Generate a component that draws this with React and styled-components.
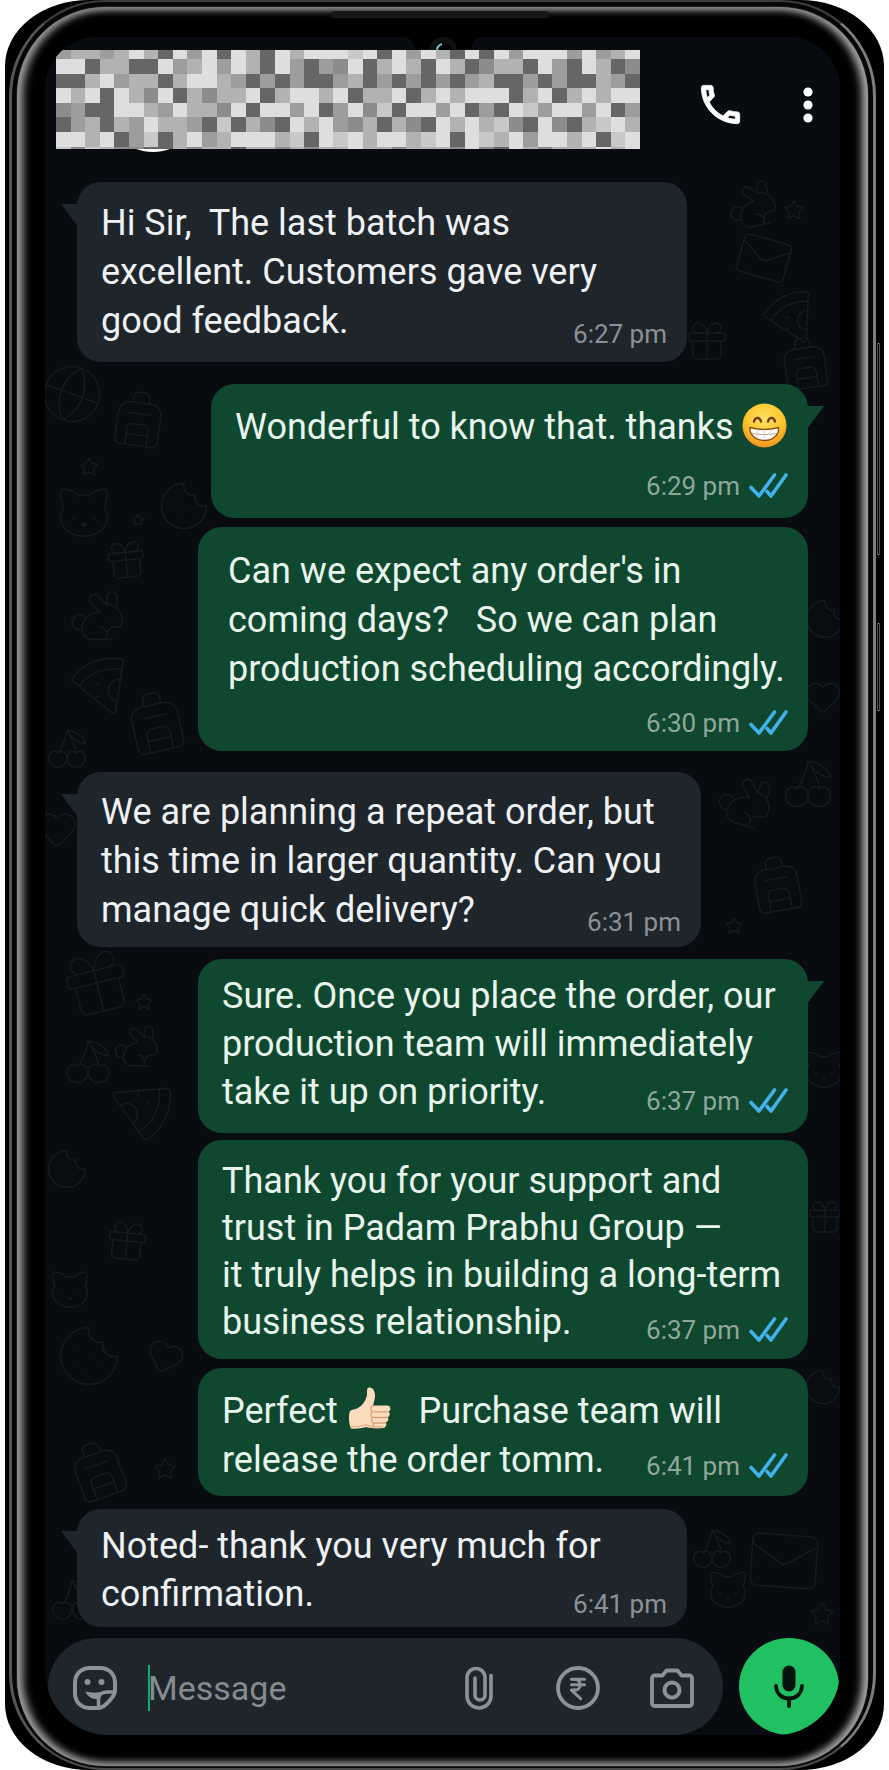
import React, { useState } from "react";
import styled, { createGlobalStyle } from "styled-components";
import {
  Backpack,
  Cat,
  Cherry,
  Cookie,
  Gift,
  Globe,
  Heart,
  IndianRupee,
  Mail,
  Pizza,
  Rabbit,
  Star
} from "lucide-react";
import { MdOutlineCall } from "react-icons/md";

const GlobalStyle = createGlobalStyle`
  * {
    box-sizing: border-box;
  }

  body {
    margin: 0;
    background: #fff;
    font-family: Roboto, "Liberation Sans", sans-serif;
  }
`;

/* ---------- phone ---------- */

const Page = styled.div`
  padding: 0 5px;
`;

const Shell = styled.div`
  position: relative;
  padding: 0 8px 0 4px;
  background: #000;
  border-radius: 84px / 66px;
  overflow: hidden;
`;

const Rim = styled.div`
  padding: 5px 5px 2px;
  background: #060606;
  border: solid #666;
  border-width: 2px 3px;
  border-color: #3c3c3c #7e7e7e #4a4a4a #565656;
  border-radius: 96px;
`;

const Glass = styled.div`
  position: relative;
  padding: 30px 28px 31px;
  background: #000;
  border-radius: 88px;
  box-shadow: inset 6px 0 9px 0 #9a9a9a, inset -6px 0 9px 0 #a6a6a6,
    inset 0 4px 8px -1px #4a4a4a, inset 0 -4px 8px -1px #6a6a6a,
    0 0 0 1px #1c1c1c;
`;

const Speaker = styled.div`
  position: absolute;
  top: 4px;
  left: 50%;
  width: 218px;
  height: 7px;
  margin-left: -112px;
  background: #161616;
  border-radius: 4px;
`;

const SideKey = styled.div`
  position: absolute;
  top: ${props => props.$top}px;
  right: 4px;
  width: 3px;
  height: ${props => props.$height}px;
  border: 1px solid #555;
  border-top-color: #bbb;
  border-bottom-color: #bbb;
  border-radius: 2px;
`;

const Screen = styled.div`
  position: relative;
  background: #080c11;
  border-radius: 52px 52px 64px 64px;
  overflow: hidden;
`;

const Notch = styled.svg`
  position: absolute;
  top: 0;
  left: 50%;
  margin-left: -42px;
`;

const Wallpaper = styled.svg`
  position: absolute;
  top: 0;
  left: 0;
  width: 100%;
  height: 100%;
  color: #151c1f;
`;

/* ---------- header ---------- */

const Header = styled.header`
  position: relative;
  display: flex;
  align-items: center;
  padding: 13px 17px 0 11px;
`;

const Avatar = styled.div`
  position: absolute;
  left: 58px;
  bottom: -3px;
  width: 100px;
  height: 96px;
  border: 3px solid #fff;
  border-radius: 50%;
`;

const HiddenName = styled.svg`
  position: relative;
  flex: 1;
  min-width: 0;
  height: 99px;
`;

const HeaderActions = styled.div`
  display: flex;
  align-items: center;
  gap: 47px;
  margin-left: 55px;
  padding-top: 10px;
`;

const IconButton = styled.button`
  display: flex;
  flex: none;
  justify-content: center;
  min-width: 30px;
  padding: 0;
  border: 0;
  background: none;
  color: ${props => props.$color || "#8d9296"};
  cursor: pointer;
`;

const CallIcon = styled(MdOutlineCall)`
  path:not([fill="none"]) {
    stroke: currentColor;
    stroke-width: 0.4px;
  }

  path[fill="none"] {
    stroke: none;
  }
`;

/* ---------- messages ---------- */

const Chat = styled.main`
  position: relative;
  display: flex;
  flex-direction: column;
  padding: 33px 32px 11px;
`;

const Bubble = styled.article`
  position: relative;
  display: grid;
  align-self: ${props => (props.$sent ? "flex-end" : "flex-start")};
  width: ${props => props.$width || 610}px;
  max-width: 100%;
  margin-top: ${props => props.$gap}px;
  padding: ${props => props.$top}px 0 0 ${props => props.$inset || 24}px;
  background: ${props => (props.$sent ? "#10482f" : "#1e262b")};
  border-radius: 24px;

  &::before {
    content: "";
    display: ${props => (props.$tail ? "block" : "none")};
    position: absolute;
    top: 22px;
    ${props => (props.$sent ? "right" : "left")}: -16px;
    width: 17px;
    height: 23px;
    background: inherit;
    clip-path: ${props =>
      props.$sent
        ? "polygon(0 0, 100% 0, 0 100%)"
        : "polygon(0 0, 100% 0, 100% 100%)"};
  }
`;

const Text = styled.p`
  grid-area: 1 / 1;
  margin: 0;
  padding: 0 8px ${props => props.$bottom}px 0;
  color: ${props => (props.$sent ? "#e9f5ec" : "#eef1f4")};
  font-size: 36px;
  line-height: ${props => props.$lineHeight}px;
  white-space: pre-wrap;
`;

const Meta = styled.div`
  grid-area: ${props => (props.$below ? "2 / 1" : "1 / 1")};
  align-self: end;
  justify-self: end;
  display: flex;
  align-items: center;
  gap: 9px;
  padding: 0 20px ${props => props.$bottom}px 0;
  color: ${props => (props.$sent ? "#8fa799" : "#8b9196")};
  font-size: 26px;
  line-height: 30px;
`;

const Emoji = styled.svg`
  width: 45px;
  height: 45px;
  vertical-align: -9px;
`;

/* ---------- composer ---------- */

const Composer = styled.form`
  position: relative;
  display: flex;
  gap: 16px;
  padding: 0 1px 0 3px;
`;

const InputPill = styled.div`
  display: flex;
  flex: 1;
  align-items: center;
  min-width: 0;
  height: 97px;
  padding: 2px 29px 0 25px;
  background: #1e262b;
  border-radius: 49px;
`;

const Field = styled.label`
  position: relative;
  flex: 1;
  min-width: 0;
  margin-left: 31px;
`;

const Caret = styled.span`
  position: absolute;
  top: 0;
  left: 0;
  width: 2px;
  height: 46px;
  background: #12a866;
`;

const MessageInput = styled.input`
  display: block;
  width: 100%;
  height: 46px;
  padding: 0;
  border: 0;
  outline: 0;
  background: none;
  color: #eef1f4;
  font: 34px/46px Roboto, "Liberation Sans", sans-serif;

  &::placeholder {
    color: #858b8f;
    opacity: 1;
  }
`;

const Tools = styled.div`
  display: flex;
  align-items: center;
  gap: 50px;

  button:first-child {
    margin-right: 12px;
  }
`;

const MicButton = styled.button`
  display: flex;
  flex: none;
  align-items: center;
  justify-content: center;
  width: 100px;
  height: 97px;
  padding: 0;
  border: 0;
  border-radius: 50%;
  background: #21c063;
  color: #03140b;
  cursor: pointer;
`;

const GREYS = ["#666", "#8c8c8c", "#9d9d9d", "#b2b2b2", "#c8c8c8", "#dedede"];

// one digit per block, an index in GREYS
const MOSAIC = [
  "2332353052505305355545052530505255525235",
  "5503300523525305202150353053013305205301",
  "0035233035532020200230202020230020200320",
  "5350531503133503553503350353555035035355",
  "1200553253315055250251405525020542552502",
  "0230325332040310535213031053534105103453",
  "5535024035235553405453553450543525535045",
  "4143110031330331313353313331510531333535"
];

const DOODLES = [
  { Icon: Globe, x: -6, y: 324, size: 66, turn: 20 },
  { Icon: Backpack, x: 62, y: 350, size: 64, turn: 8 },
  { Icon: Cookie, x: 112, y: 442, size: 54 },
  { Icon: Cat, x: 8, y: 445, size: 62 },
  { Icon: Star, x: 34, y: 420, size: 20 },
  { Icon: Star, x: 86, y: 476, size: 14 },
  { Icon: Gift, x: 58, y: 500, size: 46, turn: -6 },
  { Icon: Rabbit, x: 22, y: 550, size: 60 },
  { Icon: Pizza, x: 24, y: 610, size: 64, turn: 24 },
  { Icon: Backpack, x: 76, y: 650, size: 70, turn: -12 },
  { Icon: Cherry, x: 0, y: 690, size: 44 },
  { Icon: Heart, x: -10, y: 770, size: 44 },
  { Icon: Gift, x: 14, y: 908, size: 76, turn: -14 },
  { Icon: Star, x: 90, y: 956, size: 18 },
  { Icon: Rabbit, x: 66, y: 985, size: 50 },
  { Icon: Cherry, x: 18, y: 1000, size: 50 },
  { Icon: Pizza, x: 70, y: 1040, size: 66, turn: 160 },
  { Icon: Cookie, x: 0, y: 1110, size: 44 },
  { Icon: Gift, x: 58, y: 1180, size: 48, turn: 6 },
  { Icon: Cat, x: 2, y: 1230, size: 46 },
  { Icon: Cookie, x: 10, y: 1285, size: 68 },
  { Icon: Heart, x: 100, y: 1300, size: 40, turn: 20 },
  { Icon: Backpack, x: 20, y: 1400, size: 66, turn: -20 },
  { Icon: Star, x: 108, y: 1420, size: 24 },
  { Icon: Cherry, x: 4, y: 1540, size: 46 },
  { Icon: Rabbit, x: 680, y: 142, size: 54, turn: -12 },
  { Icon: Mail, x: 690, y: 192, size: 58, turn: 16 },
  { Icon: Star, x: 738, y: 162, size: 22 },
  { Icon: Pizza, x: 716, y: 246, size: 58, turn: 18 },
  { Icon: Gift, x: 638, y: 280, size: 48 },
  { Icon: Backpack, x: 730, y: 296, size: 60, turn: -8 },
  { Icon: Cookie, x: 758, y: 560, size: 44 },
  { Icon: Heart, x: 758, y: 640, size: 40 },
  { Icon: Rabbit, x: 670, y: 735, size: 60, turn: 16 },
  { Icon: Cherry, x: 736, y: 720, size: 54 },
  { Icon: Backpack, x: 700, y: 815, size: 64, turn: -10 },
  { Icon: Star, x: 680, y: 880, size: 18 },
  { Icon: Cat, x: 756, y: 1010, size: 46 },
  { Icon: Gift, x: 760, y: 1160, size: 40 },
  { Icon: Cookie, x: 758, y: 1330, size: 40 },
  { Icon: Cherry, x: 645, y: 1490, size: 44 },
  { Icon: Mail, x: 700, y: 1485, size: 78, turn: 4 },
  { Icon: Cat, x: 660, y: 1530, size: 46 },
  { Icon: Star, x: 764, y: 1564, size: 26 }
];

const Grin = () => (
  <Emoji viewBox="0 0 45 45" role="img" aria-label="beaming face">
    <defs>
      <radialGradient id="grin" cx="50%" cy="35%" r="65%">
        <stop offset="0" stopColor="#ffe264" />
        <stop offset="0.65" stopColor="#fdc52c" />
        <stop offset="1" stopColor="#f0901d" />
      </radialGradient>
    </defs>
    <circle cx="22.5" cy="22.5" r="22" fill="url(#grin)" />
    <g fill="none" stroke="#6b3d12" strokeWidth="2.4" strokeLinecap="round">
      <path d="M12 18.5c1.2-4.8 5.8-4.8 7 0" />
      <path d="M26 18.5c1.2-4.8 5.8-4.8 7 0" />
    </g>
    <path
      d="M8 24.5c9 2.4 20 2.4 28.5 0 .8 7.5-5.5 13-14.200 13S7.2 32 8 24.5z"
      fill="#fff"
      stroke="#8a4e17"
      strokeWidth="1.4"
    />
    <path d="M9 30c8 2 19 2 27 0" fill="none" stroke="#b9a48c" />
    <path
      d="M15.5 26v9.5M22.3 26.5V37M29 26v9.5"
      stroke="#d9cdbd"
      strokeWidth="0.8"
    />
  </Emoji>
);

const ThumbsUp = () => (
  <Emoji viewBox="0 0 45 45" role="img" aria-label="thumbs up">
    <path
      d="M3 24c2-2 5-1 8-3 5-3 8-8 9-13 .5-3-1-7 2-7.5 4-.5 6 4 6 8 0 4-1.5 7-2 10h14c4 0 4.5 5 1.5 6 2 1.5 1.5 5-1 5.5 1.5 2 1 4.5-1.5 5 1 2.5 0 5.5-3 6-4 .8-12 .5-17-1-5 1.5-10 2-15 1.5C1.5 37 1.5 27 3 24z"
      fill="#fbdcbc"
    />
    <path
      d="M26 18.5c-3 1-2.5 5-.5 6-2 1.5-2 5 0 6-1.5 2-1 4.5 1 5.5-.5 2-.2 4 1 5M27 24.8h13.5M27 30.5h13M27.5 36h11"
      fill="none"
      stroke="#d9a077"
      strokeWidth="1.3"
      strokeLinecap="round"
    />
    <path
      d="M4 39.5c6 .5 11-.5 15-1.5 5 2 13 2.2 17 1.5"
      fill="none"
      stroke="#e6b48e"
      strokeWidth="1.4"
    />
  </Emoji>
);

const Ticks = () => (
  <svg
    width="39"
    height="26"
    viewBox="0 0 39 26"
    fill="none"
    stroke="#43b2ec"
    strokeWidth="3.6"
    strokeLinecap="round"
    strokeLinejoin="round"
    role="img"
    aria-label="Read"
  >
    <path d="M2 14.5l8 8.5L25.5 2M18 18.5l4 4.5L37 2" />
  </svg>
);

const StickerIcon = () => (
  <svg width="44" height="44" viewBox="0 0 44 44" fill="none">
    <path
      d="M17 2h10c9 0 15 6 15 15v8c0 5-11 17-16 17h-9C8 42 2 36 2 27V17C2 8 8 2 17 2z"
      stroke="currentColor"
      strokeWidth="4"
    />
    <path
      d="M25.5 42v-8c0-5 3-8 8-8H42"
      stroke="currentColor"
      strokeWidth="3.5"
    />
    <path
      d="M12.5 25.5c6 1.5 12 1.5 18 0L25 33c-6 .5-10.5-2.5-12.5-7.5z"
      fill="currentColor"
    />
    <circle cx="14.5" cy="16" r="3" fill="currentColor" />
    <circle cx="28.5" cy="16" r="3" fill="currentColor" />
  </svg>
);

const ClipIcon = () => (
  <svg
    width="28"
    height="44"
    viewBox="0 0 28 44"
    fill="none"
    stroke="currentColor"
    strokeWidth="3.6"
    strokeLinecap="round"
  >
    <path d="M26 9.5V30a12 12 0 0 1-24 0V11.5a9 9 0 0 1 18 0V29a5 5 0 0 1-10 0V12" />
  </svg>
);

const RupeeIcon = () => (
  <svg width="44" height="44" viewBox="0 0 44 44" fill="none">
    <circle cx="22" cy="22" r="20" stroke="currentColor" strokeWidth="3.8" />
    <IndianRupee x={9} y={10} size={26} strokeWidth={2.8} />
  </svg>
);

const CameraIcon = () => (
  <svg
    width="44"
    height="40"
    viewBox="0 0 44 40"
    fill="none"
    stroke="currentColor"
    strokeWidth="3.8"
    strokeLinejoin="round"
  >
    <path d="M4.5 7.5h8l4-5h11l4 5h8A2.5 2.5 0 0 1 42 10v25.5a2.5 2.5 0 0 1-2.5 2.5h-35A2.5 2.5 0 0 1 2 35.5V10a2.5 2.5 0 0 1 2.5-2.5z" />
    <circle cx="22" cy="22" r="7.5" strokeWidth="4" />
  </svg>
);

const MicIcon = () => (
  <svg width="30" height="43" viewBox="0 0 30 43" fill="none">
    <rect x="8.5" y="0.5" width="13" height="26" rx="6.5" fill="currentColor" />
    <path
      d="M2 21c.5 8 6 12.5 13 12.5S27.5 29 28 21M15 33.5V41"
      stroke="currentColor"
      strokeWidth="3.8"
      strokeLinecap="round"
    />
  </svg>
);

const DotsIcon = () => (
  <svg width="10" height="36" viewBox="0 0 10 36" fill="currentColor">
    <circle cx="5" cy="5" r="4.6" />
    <circle cx="5" cy="18" r="4.6" />
    <circle cx="5" cy="31" r="4.6" />
  </svg>
);

const MESSAGES = [
  {
    time: "6:27 pm",
    tail: true,
    gap: 0,
    top: 17,
    bottom: 16,
    metaBottom: 13,
    text: (
      <>
        Hi Sir,{"  "}The last batch was
        <br />
        excellent. Customers gave very
        <br />
        good feedback.
      </>
    )
  },
  {
    sent: true,
    time: "6:29 pm",
    tail: true,
    gap: 22,
    width: 597,
    top: 19,
    bottom: 19,
    metaBottom: 17,
    metaBelow: true,
    text: (
      <>
        Wonderful to know that. thanks <Grin />
      </>
    )
  },
  {
    sent: true,
    time: "6:30 pm",
    gap: 9,
    top: 20,
    inset: 30,
    bottom: 14,
    metaBottom: 13,
    metaBelow: true,
    text: (
      <>
        Can we expect any order's in
        <br />
        coming days?{"   "}So we can plan
        <br />
        production scheduling accordingly.
      </>
    )
  },
  {
    time: "6:31 pm",
    tail: true,
    gap: 21,
    width: 624,
    top: 16,
    bottom: 12,
    metaBottom: 10,
    text: (
      <>
        We are planning a repeat order, but
        <br />
        this time in larger quantity. Can you
        <br />
        manage quick delivery?
      </>
    )
  },
  {
    sent: true,
    time: "6:37 pm",
    tail: true,
    gap: 12,
    lineHeight: 48,
    top: 13,
    bottom: 17,
    metaBottom: 17,
    text: (
      <>
        Sure. Once you place the order, our
        <br />
        production team will immediately
        <br />
        take it up on priority.
      </>
    )
  },
  {
    sent: true,
    time: "6:37 pm",
    gap: 7,
    lineHeight: 47,
    top: 18,
    bottom: 13,
    metaBottom: 14,
    text: (
      <>
        Thank you for your support and
        <br />
        trust in Padam Prabhu Group —
        <br />
        it truly helps in building a long-term
        <br />
        business relationship.
      </>
    )
  },
  {
    sent: true,
    time: "6:41 pm",
    gap: 9,
    top: 19,
    bottom: 11,
    metaBottom: 15,
    text: (
      <>
        Perfect <ThumbsUp />
        {"   "}Purchase team will
        <br />
        release the order tomm.
      </>
    )
  },
  {
    time: "6:41 pm",
    tail: true,
    gap: 13,
    lineHeight: 48,
    top: 13,
    bottom: 9,
    metaBottom: 8,
    text: (
      <>
        Noted- thank you very much for
        <br />
        confirmation.
      </>
    )
  }
];

const Message = ({ message }) => (
  <Bubble
    $sent={message.sent}
    $tail={message.tail}
    $width={message.width}
    $gap={message.gap}
    $top={message.top}
    $inset={message.inset}
  >
    <Text
      $sent={message.sent}
      $bottom={message.bottom}
      $lineHeight={message.lineHeight || 49}
    >
      {message.text}
    </Text>
    <Meta
      $sent={message.sent}
      $bottom={message.metaBottom}
      $below={message.metaBelow}
    >
      <time>{message.time}</time>
      {message.sent && <Ticks />}
    </Meta>
  </Bubble>
);

const App = () => {
  const [draft, setDraft] = useState("");

  return (
    <Page>
      <GlobalStyle />
      <Shell>
        <Rim>
          <Glass>
            <Speaker />
            <Screen>
              <Wallpaper aria-hidden="true">
                {DOODLES.map(({ Icon, x, y, size, turn = 0 }) => (
                  <g
                    key={`${x}-${y}`}
                    transform={`rotate(${turn} ${x + size / 2} ${y + size / 2})`}
                  >
                    <Icon x={x} y={y} size={size} strokeWidth={1.4} absoluteStrokeWidth />
                  </g>
                ))}
              </Wallpaper>
              <Notch width="84" height="30" viewBox="0 0 84 30" aria-hidden="true">
                <path d="M0 0h84c-10 0-12 4-14 12H14C12 4 10 0 0 0z" fill="#000" />
                <circle cx="42" cy="14" r="14" fill="#0e1112" />
                <circle cx="42" cy="14" r="9" fill="#000" />
                <path
                  d="M36 13c0-3 2-5 5-6"
                  fill="none"
                  stroke="#6fc3cc"
                  strokeWidth="2"
                />
              </Notch>
              <Header>
                <Avatar />
                <HiddenName
                  viewBox="0 0 40 99"
                  preserveAspectRatio="none"
                  shapeRendering="crispEdges"
                  role="img"
                  aria-label="Hidden contact"
                >
                  {MOSAIC.map((row, r) =>
                    row.split("").map((shade, c) => (
                      <rect
                        key={`${r}-${c}`}
                        x={c}
                        y={r === 0 ? 0 : 9 + (r - 1) * 14.6}
                        width="1"
                        height={r === 0 ? 9 : 14.6}
                        fill={GREYS[shade]}
                      />
                    ))
                  )}
                </HiddenName>
                <HeaderActions>
                  <IconButton type="button" aria-label="Call" $color="#fff">
                    <CallIcon size={51} />
                  </IconButton>
                  <IconButton type="button" aria-label="More options" $color="#fff">
                    <DotsIcon />
                  </IconButton>
                </HeaderActions>
              </Header>
              <Chat>
                {MESSAGES.map((message, i) => (
                  <Message key={i} message={message} />
                ))}
              </Chat>
              <Composer onSubmit={e => e.preventDefault()}>
                <InputPill>
                  <IconButton type="button" aria-label="Stickers">
                    <StickerIcon />
                  </IconButton>
                  <Field>
                    <MessageInput
                      type="text"
                      aria-label="Message"
                      placeholder="Message"
                      value={draft}
                      onChange={e => setDraft(e.target.value)}
                    />
                    {!draft && <Caret />}
                  </Field>
                  <Tools>
                    <IconButton type="button" aria-label="Attach">
                      <ClipIcon />
                    </IconButton>
                    <IconButton type="button" aria-label="Payment">
                      <RupeeIcon />
                    </IconButton>
                    <IconButton type="button" aria-label="Camera">
                      <CameraIcon />
                    </IconButton>
                  </Tools>
                </InputPill>
                <MicButton type="button" aria-label="Record voice message">
                  <MicIcon />
                </MicButton>
              </Composer>
            </Screen>
          </Glass>
        </Rim>
        <SideKey $top={343} $height={212} />
        <SideKey $top={623} $height={88} />
      </Shell>
    </Page>
  );
};

export default App;
